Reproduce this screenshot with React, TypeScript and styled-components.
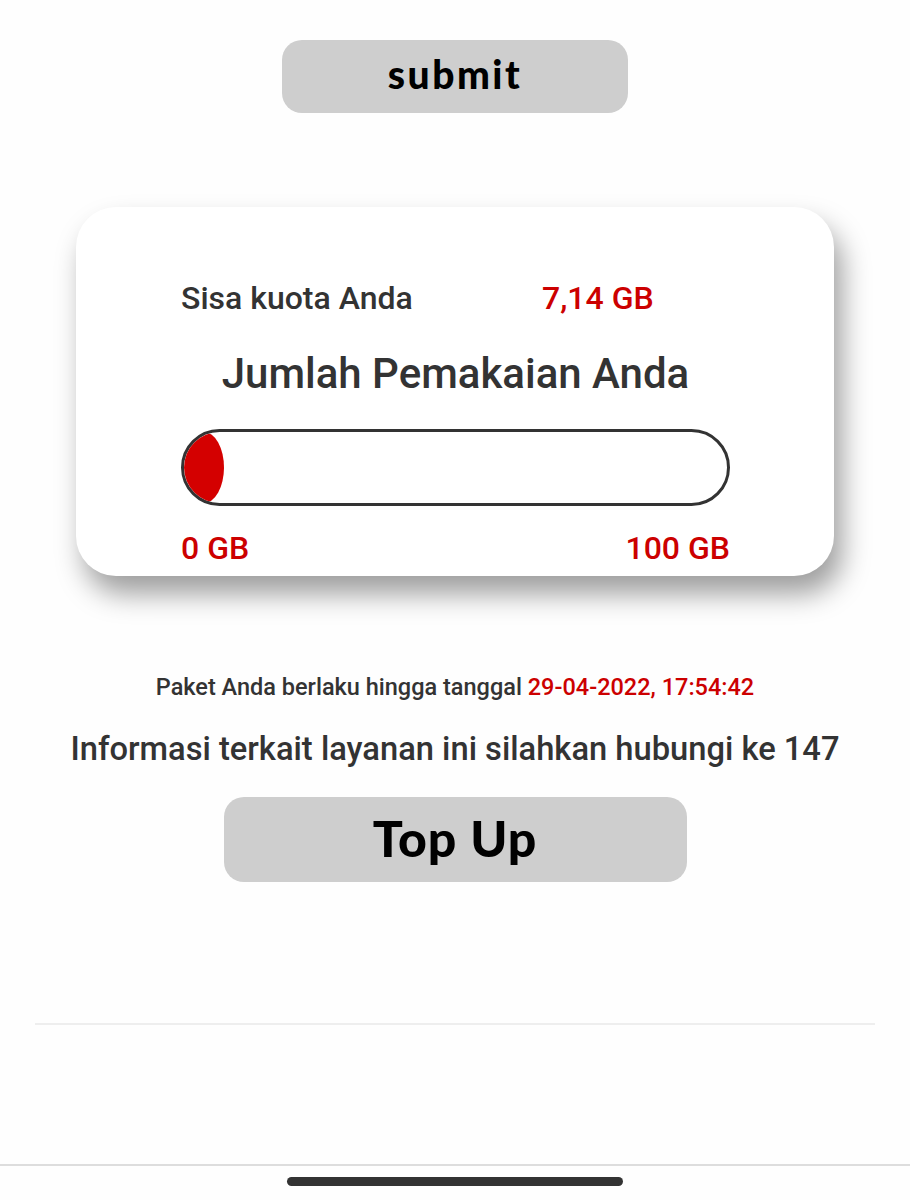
import styled, { createGlobalStyle } from 'styled-components';

const GlobalStyle = createGlobalStyle`
  html, body {
    margin: 0;
    padding: 0;
    background-color: #fefefe;
    font-family: Roboto, "Liberation Sans", sans-serif;
    color: #333333;
  }
`;

const usage = {
  remaining: '7,14 GB',
  min: '0 GB',
  max: '100 GB',
  percent: 7.3,
  expiry: '29-04-2022, 17:54:42',
};

const Styled = {
  Page: styled.div`
    display: flex;
    flex-direction: column;
    align-items: center;
    min-height: 1200px;
    padding-top: 40px;
    box-sizing: border-box;
  `,

  ActionButton: styled.button<{ $width: number; $height: number; $size: number; $spacing: number }>`
    display: flex;
    align-items: center;
    justify-content: center;
    width: ${({ $width }) => $width}px;
    height: ${({ $height }) => $height}px;
    padding: 0 0 4px;
    border: none;
    border-radius: 20px;
    background-color: #cecece;
    color: #000;
    font-family: Lato, "DejaVu Sans", sans-serif;
    font-weight: 900;
    font-size: ${({ $size }) => $size}px;
    line-height: 1;
    letter-spacing: ${({ $spacing }) => $spacing}px;
    cursor: pointer;
  `,

  Card: styled.section`
    margin-top: 94px;
    width: 758px;
    box-sizing: border-box;
    padding: 72px 104px 9px 105px;
    border-radius: 40px;
    background-color: #fff;
    box-shadow: 8px 18px 28px rgba(0, 0, 0, 0.38);
  `,

  QuotaRow: styled.div`
    display: grid;
    grid-template-columns: 361px auto;
    font-size: 32px;
    font-weight: 500;
    line-height: 38px;
  `,

  Red: styled.span`
    color: #cc0000;
  `,

  Title: styled.h2`
    margin: 33px 0 0;
    text-align: center;
    font-size: 42px;
    font-weight: 500;
    line-height: 48px;
    color: #333;
  `,

  Track: styled.div`
    margin-top: 31px;
    height: 77px;
    box-sizing: border-box;
    border: 3px solid #333;
    border-radius: 40px;
    overflow: hidden;
    background-color: #fff;
  `,

  Fill: styled.div`
    height: 100%;
    background-color: #d40000;
    border-radius: 50% / 50%;
  `,

  Scale: styled.div`
    display: flex;
    justify-content: space-between;
    margin-top: 23px;
    font-size: 32px;
    font-weight: 500;
    line-height: 38px;
    color: #cc0000;
  `,

  Expiry: styled.p`
    margin: 97px 0 0;
    font-size: 23.5px;
    font-weight: 500;
    line-height: 28px;
  `,

  Info: styled.p`
    margin: 29px 0 29px;
    font-size: 32.7px;
    font-weight: 500;
    line-height: 38px;
  `,

  Divider: styled.hr`
    width: 840px;
    margin: 141px 0 0;
    border: none;
    border-top: 2px solid #eeeeee;
  `,

  NavBar: styled.div`
    align-self: stretch;
    margin-top: 139px;
    border-top: 2px solid #dddddd;
    display: flex;
    justify-content: center;
    padding-top: 11px;
  `,

  HomeIndicator: styled.div`
    width: 336px;
    height: 9px;
    border-radius: 5px;
    background-color: #333;
  `,
};

export default function App() {
  return (
    <>
      <GlobalStyle />
      <Styled.Page>
        <Styled.ActionButton $width={346} $height={73} $size={39} $spacing={2.5}>
          submit
        </Styled.ActionButton>

        <Styled.Card>
          <Styled.QuotaRow>
            <span>Sisa kuota Anda</span>
            <Styled.Red>{usage.remaining}</Styled.Red>
          </Styled.QuotaRow>
          <Styled.Title>Jumlah Pemakaian Anda</Styled.Title>
          <Styled.Track>
            <Styled.Fill style={{ width: `${usage.percent}%` }} />
          </Styled.Track>
          <Styled.Scale>
            <span>{usage.min}</span>
            <span>{usage.max}</span>
          </Styled.Scale>
        </Styled.Card>

        <Styled.Expiry>
          Paket Anda berlaku hingga tanggal <Styled.Red>{usage.expiry}</Styled.Red>
        </Styled.Expiry>
        <Styled.Info>Informasi terkait layanan ini silahkan hubungi ke 147</Styled.Info>

        <Styled.ActionButton $width={463} $height={85} $size={50} $spacing={1}>
          Top Up
        </Styled.ActionButton>

        <Styled.Divider />
        <Styled.NavBar>
          <Styled.HomeIndicator />
        </Styled.NavBar>
      </Styled.Page>
    </>
  );
}
